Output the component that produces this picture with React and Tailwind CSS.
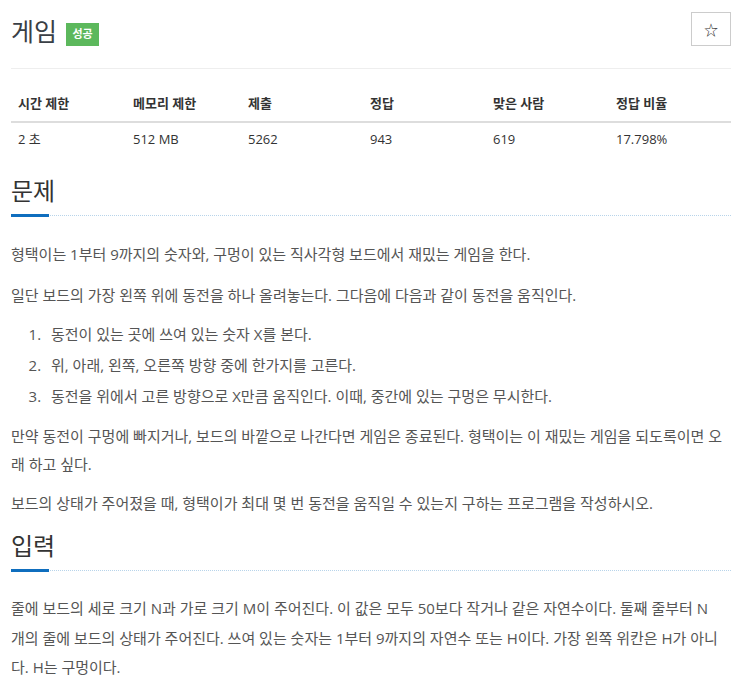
export default function App() {
  const font = { fontFamily: '"Open Sans", "Noto Sans CJK KR", sans-serif' };
  const cols = [
    { h: "시간 제한", v: "2 초", w: "w-[115px]" },
    { h: "메모리 제한", v: "512 MB", w: "w-[115px]" },
    { h: "제출", v: "5262", w: "w-[122px]" },
    { h: "정답", v: "943", w: "w-[123px]" },
    { h: "맞은 사람", v: "619", w: "w-[123px]" },
    { h: "정답 비율", v: "17.798%", w: "" },
  ];
  const Heading = ({ children, className }) => (
    <div className={className}>
      <h2 className="text-[24px] leading-[34px] text-[#333]">{children}</h2>
      <div className="relative mt-[6px] h-[3px]">
        <div className="absolute left-0 right-0 top-[1px] border-t border-dotted border-[#b8d4ea]" />
        <div className="absolute left-0 top-0 h-[3px] w-[38px] bg-[#0f6ebe]" />
      </div>
    </div>
  );
  return (
    <div className="w-[739px] bg-white pl-[11px] pr-[8px] pt-[12px]" style={font}>
      <div className="flex items-start justify-between">
        <div className="flex items-center pt-[2px]">
          <h1 className="text-[25px] leading-[34px] text-[#3a3f46]">게임</h1>
          <span className="ml-[9px] mt-[6px] flex h-[23px] w-[33px] items-center justify-center bg-[#5cb85c] text-[11px] font-bold text-white">
            성공
          </span>
        </div>
        <button className="flex h-[34px] w-[40px] items-center justify-center border border-[#ccc] bg-white text-[14px] text-[#333]">
          ☆
        </button>
      </div>
      <div className="mt-[20px] border-t border-[#eee]" />
      <table className="mt-[18px] w-full border-collapse text-[13px] text-[#333]">
        <thead>
          <tr className="border-b-2 border-[#ddd]">
            {cols.map((c) => (
              <th key={c.h} className={`${c.w} h-[35px] pl-[7px] text-left font-bold`}>
                {c.h}
              </th>
            ))}
          </tr>
        </thead>
        <tbody>
          <tr>
            {cols.map((c) => (
              <td key={c.h} className="h-[35px] pl-[7px]">
                {c.v}
              </td>
            ))}
          </tr>
        </tbody>
      </table>
      <Heading className="mt-[17px]">문제</Heading>
      <div className="mt-[23px] break-all text-[15px] leading-[29px] text-[#555]">
        <p>형택이는 1부터 9까지의 숫자와, 구멍이 있는 직사각형 보드에서 재밌는 게임을 한다.</p>
        <p className="mt-[12px]">일단 보드의 가장 왼쪽 위에 동전을 하나 올려놓는다. 그다음에 다음과 같이 동전을 움직인다.</p>
        <ol className="mt-[9px] list-decimal pl-[34px] leading-[31px]">
          <li className="pl-[6px]">동전이 있는 곳에 쓰여 있는 숫자 X를 본다.</li>
          <li className="pl-[6px]">위, 아래, 왼쪽, 오른쪽 방향 중에 한가지를 고른다.</li>
          <li className="pl-[6px]">동전을 위에서 고른 방향으로 X만큼 움직인다. 이때, 중간에 있는 구멍은 무시한다.</li>
        </ol>
        <p className="mt-[10px] leading-[28px]">
          만약 동전이 구멍에 빠지거나, 보드의 바깥으로 나간다면 게임은 종료된다. 형택이는 이 재밌는 게임을 되도록이면 오래 하고 싶다.
        </p>
        <p className="mt-[11px]">보드의 상태가 주어졌을 때, 형택이가 최대 몇 번 동전을 움직일 수 있는지 구하는 프로그램을 작성하시오.</p>
      </div>
      <Heading className="mt-[11px]">입력</Heading>
      <div className="mt-[22px] pb-[20px] text-[15px] leading-[29.5px] text-[#555]">
        <p>
          <span className="block whitespace-nowrap">줄에 보드의 세로 크기 N과 가로 크기 M이 주어진다. 이 값은 모두 50보다 작거나 같은 자연수이다. 둘째 줄부터 N</span>
          <span className="block whitespace-nowrap">개의 줄에 보드의 상태가 주어진다. 쓰여 있는 숫자는 1부터 9까지의 자연수 또는 H이다. 가장 왼쪽 위칸은 H가 아니</span>
          <span className="block whitespace-nowrap">다. H는 구멍이다.</span>
        </p>
      </div>
    </div>
  );
}
